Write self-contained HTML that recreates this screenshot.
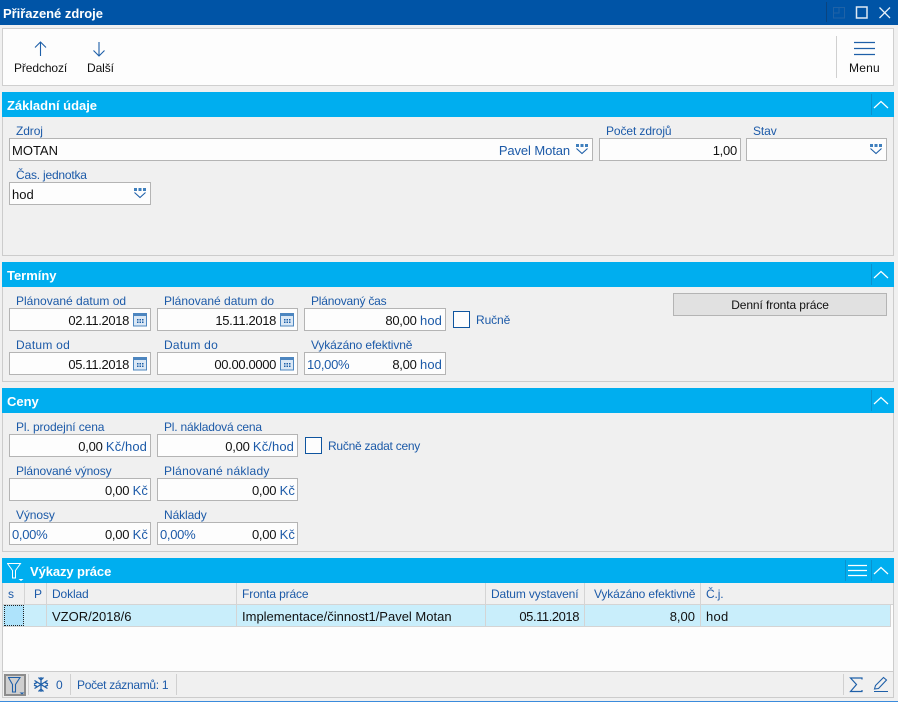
<!DOCTYPE html>
<html><head><meta charset="utf-8">
<style>
*{box-sizing:border-box}
html,body{margin:0;padding:0}
body{width:898px;height:702px;position:relative;overflow:hidden;background:#f0f0f0;font:12px "Liberation Sans",sans-serif;letter-spacing:-.1px;color:#111}
div,span.a,svg.a{position:absolute}
.sec{background:#00aeef;left:2px;width:892px;height:25px;color:#fff;font-weight:bold;font-size:13px;line-height:27px;padding-left:5px;letter-spacing:-.02px}
.body{left:2px;width:892px;border:1px solid #ccc;border-top:0;background:#f0f0f0}
.l{color:#1c5aa8;line-height:14px;white-space:nowrap}
.f{background:#fdfdfd;border:1px solid #b4b4b4;height:23px;line-height:24px;white-space:nowrap;padding:0 2px;font-size:13px;letter-spacing:0}
.r{text-align:right;padding-right:3px;letter-spacing:-.25px}
.d{padding-right:21px;letter-spacing:-.35px}
.k{padding-right:2px;letter-spacing:-.25px}
.u{color:#1c5aa8;letter-spacing:.1px}
.p{color:#1c5aa8;float:left;letter-spacing:-.3px}
.cb{width:17px;height:17px;border:1px solid #0f559f;background:#fdfdfd}
.h{top:583px;height:21px;line-height:22px;color:#1c5aa8;border-right:1px solid #d4d4d4;padding-left:5px;white-space:nowrap;overflow:hidden;letter-spacing:-.13px}
.c{top:605px;height:21px;line-height:23px;border-right:1px solid #d4d4d4;padding:0 5px;white-space:nowrap;font-size:13px;letter-spacing:0}
</style></head><body>
<div style="left:0;top:0;width:898px;height:25px;background:#0054a6;color:#fff;font-weight:bold;font-size:13px;line-height:27px;padding-left:3px;letter-spacing:-.03px">Přiřazené zdroje</div>
<svg class="a" style="left:826px;top:0" width="72" height="25" fill="none">
<path d="M.5 2v20" stroke="#0a447f"/>
<rect x="7.500" y="7.500" width="11" height="10.500" stroke="#1f62a6"/>
<path d="M13 7.500v5.500h-5.500" stroke="#1f62a6"/>
<rect x="30.500" y="7" width="10.500" height="11" stroke="#dfe9f3" stroke-width="1.500"/>
<path d="M53.500 7.500l10.500 10.500M64 7.500l-10.500 10.500" stroke="#e8f0f8" stroke-width="1.300"/>
</svg>

<div style="left:2px;top:28px;width:892px;height:58px;background:#fdfdfd;border:1px solid #cfcfcf"></div>
<svg class="a" style="left:30px;top:38px" width="80" height="20" fill="none" stroke="#1e5fa8" stroke-width="1.100">
<path d="M10.500 18V4M5 9.500l5.500-5.500 5.500 5.500"/>
<path d="M69 4v14M63.500 12.500l5.500 5.500 5.500-5.500"/>
</svg>
<div style="left:14px;top:61px;line-height:14px">Předchozí</div>
<div style="left:87px;top:61px;line-height:14px">Další</div>
<div style="left:836px;top:36px;width:1px;height:42px;background:#d0d0d0"></div>
<svg class="a" style="left:854px;top:41px" width="22" height="16" stroke="#1e5fa8" stroke-width="1.200"><path d="M0 1.500h21M0 7.500h21M0 13.500h21"/></svg>
<div style="left:849px;top:61px;line-height:14px;letter-spacing:.2px">Menu</div>

<!-- Základní údaje -->
<div class="sec" style="top:92px">Základní údaje</div>
<div class="body" style="top:117px;height:139px"></div>
<div class="l" style="left:16px;top:124px">Zdroj</div>
<div class="f" style="left:9px;top:138px;width:584px">MOTAN</div>
<div class="u" style="right:328px;top:144px;line-height:14px;font-size:13px;letter-spacing:-.1px">Pavel Motan</div>
<div class="l" style="left:606px;top:124px">Počet zdrojů</div>
<div class="f r" style="left:599px;top:138px;width:142px">1,00</div>
<div class="l" style="left:753px;top:124px">Stav</div>
<div class="f" style="left:746px;top:138px;width:141px"></div>
<div class="l" style="left:16px;top:168px;letter-spacing:-.2px">Čas. jednotka</div>
<div class="f" style="left:9px;top:182px;width:142px">hod</div>

<!-- dropdown icons -->
<svg class="a" style="left:575px;top:144px" width="14" height="11" fill="none"><path d="M1 0h3v3H1zM5.500 0h3v3h-3zM10 0h3v3h-3z" fill="#3f7fbd"/><path d="M1.500 4.500l5.500 5 5.500-5" stroke="#1e5fa8" stroke-width="1.100"/></svg>
<svg class="a" style="left:869px;top:144px" width="14" height="11" fill="none"><path d="M1 0h3v3H1zM5.500 0h3v3h-3zM10 0h3v3h-3z" fill="#3f7fbd"/><path d="M1.500 4.500l5.500 5 5.500-5" stroke="#1e5fa8" stroke-width="1.100"/></svg>
<svg class="a" style="left:133px;top:188px" width="14" height="11" fill="none"><path d="M1 0h3v3H1zM5.500 0h3v3h-3zM10 0h3v3h-3z" fill="#3f7fbd"/><path d="M1.500 4.500l5.500 5 5.500-5" stroke="#1e5fa8" stroke-width="1.100"/></svg>

<!-- Termíny -->
<div class="sec" style="top:262px">Termíny</div>
<div class="body" style="top:287px;height:95px"></div>
<div class="l" style="left:16px;top:294px;letter-spacing:0">Plánované datum od</div>
<div class="f r d" style="left:9px;top:308px;width:142px">02.11.2018</div>
<div class="l" style="left:164px;top:294px;letter-spacing:0">Plánované datum do</div>
<div class="f r d" style="left:157px;top:308px;width:141px">15.11.2018</div>
<div class="l" style="left:311px;top:294px;letter-spacing:-.2px">Plánovaný čas</div>
<div class="f r" style="left:304px;top:308px;width:142px">80,00 <span class="u">hod</span></div>
<div class="cb" style="left:453px;top:311px"></div>
<div class="l" style="left:476px;top:313px">Ručně</div>
<div style="left:673px;top:293px;width:214px;height:23px;background:#e1e1e1;border:1px solid #b4b4b4;text-align:center;line-height:23px">Denní fronta práce</div>
<div class="l" style="left:16px;top:338px;letter-spacing:.25px">Datum od</div>
<div class="f r d" style="left:9px;top:352px;width:142px">05.11.2018</div>
<div class="l" style="left:164px;top:338px;letter-spacing:.25px">Datum do</div>
<div class="f r d" style="left:157px;top:352px;width:141px">00.00.0000</div>
<div class="l" style="left:311px;top:338px;letter-spacing:-.13px">Vykázáno efektivně</div>
<div class="f r" style="left:304px;top:352px;width:142px"><span class="p">10,00%</span>8,00 <span class="u">hod</span></div>

<svg class="a" style="left:133px;top:312px" width="14" height="15"><rect x=".5" y="1.500" width="13" height="12.500" fill="#dbe8f5" stroke="#4d86c0"/><rect x="0" y="1" width="14" height="3" fill="#4d86c0"/><path d="M4 7h1.500v1.500H4zM6.500 7H8v1.500H6.500zM9 7h1.500v1.500H9zM4 9.500h1.500V11H4zM6.500 9.500H8V11H6.500zM9 9.500h1.500V11H9z" fill="#1e5fa8"/></svg>
<svg class="a" style="left:280px;top:312px" width="14" height="15"><rect x=".5" y="1.500" width="13" height="12.500" fill="#dbe8f5" stroke="#4d86c0"/><rect x="0" y="1" width="14" height="3" fill="#4d86c0"/><path d="M4 7h1.500v1.500H4zM6.500 7H8v1.500H6.500zM9 7h1.500v1.500H9zM4 9.500h1.500V11H4zM6.500 9.500H8V11H6.500zM9 9.500h1.500V11H9z" fill="#1e5fa8"/></svg>
<svg class="a" style="left:133px;top:356px" width="14" height="15"><rect x=".5" y="1.500" width="13" height="12.500" fill="#dbe8f5" stroke="#4d86c0"/><rect x="0" y="1" width="14" height="3" fill="#4d86c0"/><path d="M4 7h1.500v1.500H4zM6.500 7H8v1.500H6.500zM9 7h1.500v1.500H9zM4 9.500h1.500V11H4zM6.500 9.500H8V11H6.500zM9 9.500h1.500V11H9z" fill="#1e5fa8"/></svg>
<svg class="a" style="left:280px;top:356px" width="14" height="15"><rect x=".5" y="1.500" width="13" height="12.500" fill="#dbe8f5" stroke="#4d86c0"/><rect x="0" y="1" width="14" height="3" fill="#4d86c0"/><path d="M4 7h1.500v1.500H4zM6.500 7H8v1.500H6.500zM9 7h1.500v1.500H9zM4 9.500h1.500V11H4zM6.500 9.500H8V11H6.500zM9 9.500h1.500V11H9z" fill="#1e5fa8"/></svg>

<!-- Ceny -->
<div class="sec" style="top:388px">Ceny</div>
<div class="body" style="top:413px;height:139px"></div>
<div class="l" style="left:16px;top:420px">Pl. prodejní cena</div>
<div class="f r" style="left:9px;top:434px;width:142px">0,00 <span class="u">Kč/hod</span></div>
<div class="l" style="left:164px;top:420px;letter-spacing:-.2px">Pl. nákladová cena</div>
<div class="f r" style="left:157px;top:434px;width:141px">0,00 <span class="u">Kč/hod</span></div>
<div class="cb" style="left:305px;top:437px"></div>
<div class="l" style="left:328px;top:439px;letter-spacing:-.25px">Ručně zadat ceny</div>
<div class="l" style="left:16px;top:464px;letter-spacing:-.12px">Plánované výnosy</div>
<div class="f r k" style="left:9px;top:478px;width:142px">0,00 <span class="u">Kč</span></div>
<div class="l" style="left:164px;top:464px;letter-spacing:.25px">Plánované náklady</div>
<div class="f r k" style="left:157px;top:478px;width:141px">0,00 <span class="u">Kč</span></div>
<div class="l" style="left:16px;top:508px">Výnosy</div>
<div class="f r k" style="left:9px;top:522px;width:142px"><span class="p">0,00%</span>0,00 <span class="u">Kč</span></div>
<div class="l" style="left:164px;top:508px">Náklady</div>
<div class="f r k" style="left:157px;top:522px;width:141px"><span class="p">0,00%</span>0,00 <span class="u">Kč</span></div>

<!-- Výkazy -->
<div class="sec" style="top:558px;padding-left:28px;letter-spacing:-.1px">Výkazy práce</div>
<svg class="a" style="left:7px;top:563px" width="18" height="18" fill="none" stroke="#fff"><path d="M.5 .5h13L8.500 7.500v7.500h-3V7.500z" stroke-width="1"/><path d="M11.500 16h5l-2.500 2z" fill="#fff" stroke="none"/></svg>

<!-- Section header right -->
<svg class="a" style="left:868px;top:92px" width="26" height="25" fill="none"><path d="M3.500 2v21" stroke="#0a92cf"/><path d="M6 16l7-6.500 7 6.500" stroke="#fff" stroke-width="1.200"/></svg>
<svg class="a" style="left:868px;top:262px" width="26" height="25" fill="none"><path d="M3.500 2v21" stroke="#0a92cf"/><path d="M6 16l7-6.500 7 6.500" stroke="#fff" stroke-width="1.200"/></svg>
<svg class="a" style="left:868px;top:388px" width="26" height="25" fill="none"><path d="M3.500 2v21" stroke="#0a92cf"/><path d="M6 16l7-6.500 7 6.500" stroke="#fff" stroke-width="1.200"/></svg>
<svg class="a" style="left:868px;top:558px" width="26" height="25" fill="none"><path d="M3.500 2v21" stroke="#0a92cf"/><path d="M6 16l7-6.500 7 6.500" stroke="#fff" stroke-width="1.200"/></svg>
<svg class="a" style="left:845px;top:558px" width="24" height="25" fill="none"><path d="M.5 2v21" stroke="#0a92cf"/><path d="M3 7.500h19M3 12.500h19M3 17.500h19" stroke="#fff" stroke-width="1.200"/></svg>

<div class="body" style="top:583px;height:115px;background:#fdfdfd"></div>
<div style="left:3px;top:583px;width:890px;height:22px;background:#f0f0f0;border-bottom:1px solid #d4d4d4"></div>
<div class="h" style="left:3px;width:22px">s</div>
<div class="h" style="left:25px;width:22px;padding-left:9px">P</div>
<div class="h" style="left:47px;width:190px">Doklad</div>
<div class="h" style="left:237px;width:249px">Fronta práce</div>
<div class="h" style="left:486px;width:99px">Datum vystavení</div>
<div class="h" style="left:585px;width:116px;padding-left:9px">Vykázáno efektivně</div>
<div class="h" style="left:701px;width:190px;border-right:0">Č.j.</div>

<div style="left:3px;top:605px;width:888px;height:22px;background:#c9eefb;border-bottom:1px solid #d4d4d4;border-right:1px solid #d4d4d4"></div>
<div style="left:4px;top:605px;width:20px;height:21px;background:#aee3fb;border:1px dotted #222"></div>
<div class="c" style="left:25px;width:22px"></div>
<div class="c" style="left:47px;width:190px">VZOR/2018/6</div>
<div class="c" style="left:237px;width:249px">Implementace/činnost1/Pavel Motan</div>
<div class="c r" style="left:486px;width:99px;padding-right:5px;letter-spacing:-.45px">05.11.2018</div>
<div class="c r" style="left:585px;width:116px;padding-right:5px">8,00</div>
<div class="c" style="left:701px;width:189px;border-right:0;letter-spacing:.3px">hod</div>

<!-- Status bar -->
<div style="left:3px;top:671px;width:890px;height:1px;background:#ccc"></div>
<div style="left:3px;top:672px;width:890px;height:25px;background:#f0f0f0"></div>
<div style="left:4px;top:674px;width:22px;height:22px;background:#cfcfcf;border:2px solid #8c8c8c"></div>
<svg class="a" style="left:8px;top:677px" width="18" height="18" fill="none" stroke="#1e5fa8"><path d="M.5 .5h11.500L7.500 7.500v7.500h-3V7.500z" stroke-width="1.100"/><path d="M11.500 15.500h5l-2.500 2z" fill="#1e5fa8" stroke="none"/></svg>
<div style="left:28px;top:674px;width:1px;height:21px;background:#d0d0d0"></div>
<svg class="a" style="left:33px;top:676px" width="16" height="17" fill="none" stroke="#1e5fa8" stroke-width="1.300"><path d="M8 1v15M1.500 4.500l13 8M14.500 4.500l-13 8M5.500 1.500L8 4l2.500-2.500M5.500 15.500L8 13l2.500 2.500M1 8l3-1.500M15 8l-3-1.500M1 9l3 1.500M15 9l-3 1.500"/></svg>
<div class="u" style="left:56px;top:678px;line-height:14px">0</div>
<div style="left:70px;top:674px;width:1px;height:21px;background:#d0d0d0"></div>
<div class="u" style="left:77px;top:678px;line-height:14px;white-space:nowrap;letter-spacing:-.3px">Počet záznamů: 1</div>
<div style="left:176px;top:674px;width:1px;height:21px;background:#d0d0d0"></div>
<div style="left:843px;top:674px;width:1px;height:21px;background:#d0d0d0"></div>
<svg class="a" style="left:849px;top:677px" width="15" height="16" fill="none" stroke="#1e5fa8" stroke-width="1.200"><path d="M13 2.500V1H1.500l6 6.500-6 7H13v-1.500"/></svg>
<svg class="a" style="left:873px;top:676px" width="16" height="17" fill="none" stroke="#1e5fa8" stroke-width="1.100"><path d="M1.500 13l1-3.500L10.500 1.500l3 2.500-8 8.500zM1 15.500h14"/></svg>

<!-- window frame -->
<div style="left:0;top:701px;width:898px;height:1px;background:#3b8bdc"></div>
</body></html>
